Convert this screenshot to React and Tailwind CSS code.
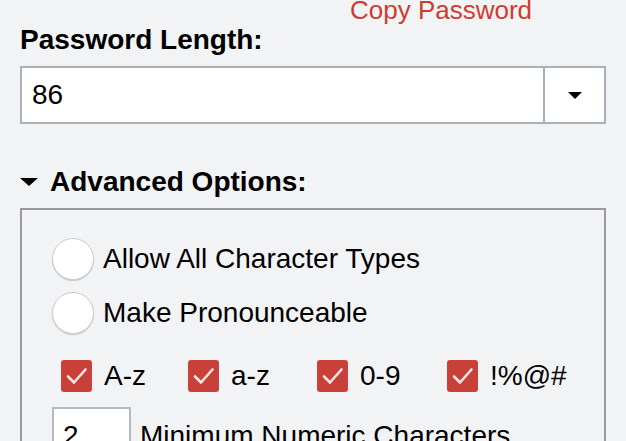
import React from 'react'

const Caret = ({ w = 14, h = 7 }) => (
  <svg width={w} height={h} viewBox={`0 0 ${w} ${h}`} className="block">
    <polygon points={`0,0 ${w},0 ${w / 2},${h}`} fill="#000" />
  </svg>
)

const Radio = ({ label }) => (
  <div className="flex items-center gap-[9px] h-[42px]">
    <span className="w-[42px] h-[42px] rounded-full bg-white border-[1.5px] border-[#c9cdd3] shadow-[0_1px_1px_rgba(0,0,0,0.18)]" />
    <span>{label}</span>
  </div>
)

const Check = ({ label }) => (
  <div className="flex items-center gap-[12px]">
    <span className="w-[31px] h-[32px] rounded-[3px] bg-[#c8403a] flex items-center justify-center">
      <svg width="31" height="32" viewBox="0 0 31 32">
        <path d="M7 16.5 L13 22.5 L24.5 9.5" fill="none" stroke="#fbe4e1" strokeWidth="2.6" strokeLinecap="round" strokeLinejoin="round" />
      </svg>
    </span>
    <span>{label}</span>
  </div>
)

export default function App() {
  return (
    <div className="w-[626px] h-[441px] overflow-hidden bg-[#f2f3f5] text-black font-['Liberation_Sans',Arial,sans-serif]">
      <div className="px-[20px]">
        {/* copy link */}
        <div className="-mt-[3px] pl-[330px] text-[26px] leading-none text-[#cf3b30]">Copy Password</div>

        <div className="mt-[3px] text-[28px] leading-none font-bold">Password Length:</div>

        {/* length select */}
        <div className="mt-[12px] flex h-[58px] border-2 border-[#aab0b8] bg-white">
          <div className="flex-1 flex items-center pl-[10px] text-[28px]">86</div>
          <div className="w-[61px] border-l-2 border-[#aab0b8] flex items-center justify-center">
            <Caret />
          </div>
        </div>

        {/* advanced */}
        <div className="mt-[44px] flex items-center gap-[12px]">
          <Caret w={18} h={8} />
          <span className="text-[28px] leading-none font-bold">Advanced Options:</span>
        </div>

        <div className="mt-[12px] border-2 border-[#9a9a9a] pl-[30px] pt-[28px] pb-[20px] text-[28px] leading-none">
          <div className="flex flex-col gap-[12px]">
            <Radio label="Allow All Character Types" />
            <Radio label="Make Pronounceable" />
          </div>

          <div className="mt-[26px] pl-[9px] grid grid-cols-[127px_129px_130px_auto]">
            <Check label="A-z" />
            <Check label="a-z" />
            <Check label="0-9" />
            <Check label="!%@#" />
          </div>

          <div className="mt-[15px] flex items-center gap-[9px]">
            <div className="w-[79px] h-[58px] border-2 border-[#b5bac2] bg-white flex items-center pl-[9px]">2</div>
            <span>Minimum Numeric Characters</span>
          </div>
        </div>
      </div>
    </div>
  )
}
